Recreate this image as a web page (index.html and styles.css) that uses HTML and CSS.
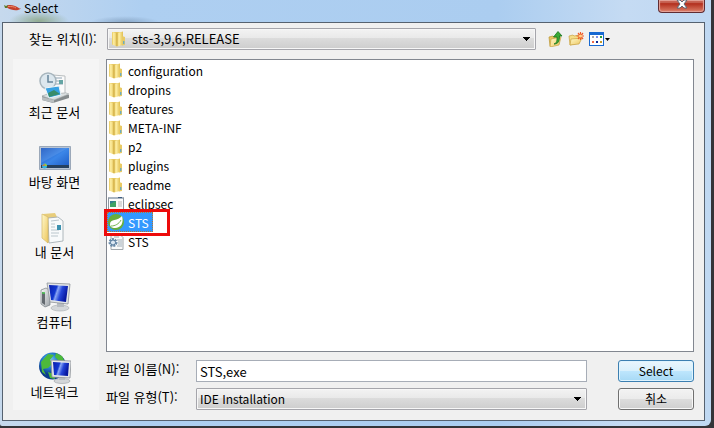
FILE: index.html
```html
<!DOCTYPE html>
<html lang="ko">
<head>
<meta charset="utf-8">
<title>Select</title>
<link rel="stylesheet" href="styles.css">
</head>
<body>
<svg class="defs" aria-hidden="true">
  <defs>
    <linearGradient id="gold" x1="0" x2="1"><stop offset="0" stop-color="#e6c75c"/><stop offset=".35" stop-color="#fff0a6"/><stop offset="1" stop-color="#e0bf52"/></linearGradient>
    <linearGradient id="pale" x1="0" x2="1" y2="1"><stop offset="0" stop-color="#fff9cc"/><stop offset="1" stop-color="#edc65c"/></linearGradient>
    <linearGradient id="screen" x1="0" x2="1" y2="1"><stop offset="0" stop-color="#174fb8"/><stop offset=".5" stop-color="#3b86e8"/><stop offset="1" stop-color="#1b59c4"/></linearGradient>
    <linearGradient id="deep" x1="0" x2="1" y2=".3"><stop offset="0" stop-color="#0a1fae"/><stop offset=".4" stop-color="#1238d0"/><stop offset=".5" stop-color="#8aa6f4"/><stop offset=".7" stop-color="#2445d8"/><stop offset="1" stop-color="#0718a0"/></linearGradient>
    <linearGradient id="metal" x1="0" x2="1" y2="1"><stop offset="0" stop-color="#fafafa"/><stop offset="1" stop-color="#9da3a8"/></linearGradient>
    <radialGradient id="globe" cx=".4" cy=".3"><stop offset="0" stop-color="#8fe0ff"/><stop offset=".5" stop-color="#2b86d6"/><stop offset="1" stop-color="#0b3c8c"/></radialGradient>
    <symbol id="folder" viewBox="0 0 16 16">
      <path d="M2 1h9l1 1v12H2z" fill="#e5c65e"/>
      <path d="M1 1l5 1v13.500l-5-2z" fill="url(#gold)"/>
      <path d="M6 2l6-1.500v13.500l-6 1.500z" fill="url(#gold)"/>
      <path d="M6 2v13" stroke="#c5a03c" stroke-width=".7"/>
      <path d="M11 5l3 1v8l-3 .500z" fill="#e8ca64"/>
      <path d="M12.800 10v3" stroke="#3ba0e6"/>
    </symbol>
  </defs>
</svg>
<main class="window">
  <header class="titlebar">
    <svg class="pepper" viewBox="0 0 18 12" aria-hidden="true"><path d="M4 3.500c4-1 8 0 11 2 1 1 2 1 3 1-3 3-10 2-14-1z" fill="#c4402e"/><path d="M5 4.500c4 0 6 0 8 1.500" stroke="#ee8a66" fill="none"/><path d="M1 3l2 1 2-1-1 3-2 0z" fill="#5d7c2c"/></svg>
    <h1>Select</h1>
    <button class="close" aria-label="Close"><svg viewBox="0 0 14 10" aria-hidden="true"><path d="M2 0h3l2 2 2-2h3L9 4l3 4H9L7 6 5 8H2l3-4z" fill="#fff" stroke="#5f6877"/></svg></button>
  </header>
  <form class="client">
    <div class="lookup">
      <label for="place">찾는 위치(I):</label>
      <div class="combo place">
        <svg class="i16" aria-hidden="true"><use href="#folder"/></svg>
        <select id="place"><option>sts-3,9,6,RELEASE</option></select>
      </div>
      <div class="tools">
        <button type="button" aria-label="Up one level"><svg viewBox="0 0 16 16" aria-hidden="true"><path d="M1 6l4-1 1 1 5-1v8l-9 2z" fill="#e8c560" stroke="#b99432" stroke-width=".7"/><path d="M3 8l10-2-2 8-9 2z" fill="url(#pale)" stroke="#c9a244" stroke-width=".7"/><path d="M6 13c3-1 3-3 3-7H5.500L10 .500 14 5h-2.500c0 5-1 8-5.500 8z" fill="#3aaa35" stroke="#17731d" stroke-width=".8"/></svg></button>
        <button type="button" aria-label="New folder"><svg viewBox="0 0 16 16" aria-hidden="true"><path d="M1 5l4-1 1 1 5-1v8l-9 2z" fill="#f4dd86" stroke="#c9a244" stroke-width=".7"/><path d="M3 8l11-1-3 6-9 1z" fill="url(#pale)" stroke="#c9a244" stroke-width=".7"/><path d="M12.500 1v8M8.500 5h8M10 2l5 6M15 2l-5 6" stroke="#f05a28" stroke-width="1.200"/><circle cx="12.500" cy="5" r="1.600" fill="#ffd28a"/></svg></button>
        <button type="button" class="views" aria-label="View menu"><svg viewBox="0 0 22 16" aria-hidden="true"><path d="M1 1h15v14H1z" fill="#1769d2"/><path d="M2 4h13v10H2z" fill="#fff"/><path d="M4 5h2v2H4z" fill="#aaa"/><path d="M8 5h2v2H8z" fill="#7a8ee8"/><path d="M12 5h2v2h-2z" fill="#239b37"/><path d="M4 10h2v2H4z" fill="#f06b4b"/><path d="M8 10h2v2H8z" fill="#0c2994"/><path d="M12 10h2v2h-2z" fill="#c49a2b"/><path d="M17 7h5l-2.500 3z"/></svg></button>
      </div>
    </div>
    <nav class="places">
      <button type="button"><svg viewBox="0 0 32 32" aria-hidden="true"><path d="M3 24l16-5 11 4v3L14 31 3 28z" fill="#858b8d"/><path d="M3 24l16-6 11 4-15 6z" fill="#dadfe0" stroke="#a5abad" stroke-width=".6"/><path d="M14 3l12 1v17l-12 1z" fill="#fbfbfb" stroke="#b9bdbf"/><path d="M16 6h7M16 9h4M16 12h8" stroke="#91a5b5"/><path d="M20 8h4v4h-4z" fill="#65a5a4"/><circle cx="9" cy="9" r="8" fill="#dce7ee" stroke="#a7b5bd" stroke-width="1.500"/><path d="M9 3v7h5" fill="none" stroke="#65859a" stroke-width="1.500"/><path d="M6 16l14-2 2 9-12 3z" fill="#37a1e2" stroke="#eef5f8"/><path d="M9 21l6-3 6 4-11 3z" fill="#398c69"/><path d="M3 25l12 3v3L3 28z" fill="#b8bdbf"/></svg>최근 문서</button>
      <button type="button"><svg viewBox="0 0 32 32" aria-hidden="true"><path d="M.500 4.500h31v23H.500z" fill="#b7c4d5" stroke="#8c9aad" stroke-width=".8"/><path d="M2 6h28v20H2z" fill="url(#screen)"/><path d="M2 6h27L2 21z" fill="#9bc7ff" opacity=".2"/><path d="M2 23h28v3H2z" fill="#25405f"/><circle cx="5.500" cy="24" r="2.500" fill="#35b5de"/><path d="M5.500 21.500a2.500 2.500 0 0 1 2.500 2.500H5.500z" fill="#95ca3c"/><path d="M3 24h2.500v-2.500z" fill="#e86c3a"/></svg>바탕 화면</button>
      <button type="button"><svg viewBox="0 0 32 32" aria-hidden="true"><path d="M4 2l12-1 2 4v22l-10 4z" fill="#e8cd7b"/><path d="M9 6l10-1 5 4v20l-14 2z" fill="#f8fafb" stroke="#9da7ad" stroke-width=".8"/><path d="M12 9l8-1M12 12h4M12 15h4M12 18h8M12 21h8M12 24h7" stroke="#aab9c2" stroke-width=".8"/><path d="M18 13h4v5h-4z" fill="#3d91af"/><path d="M3 2l6 3v26l-6-5z" fill="url(#pale)" stroke="#d6b968" stroke-width=".7"/></svg>내 문서</button>
      <button type="button"><svg viewBox="0 0 32 32" aria-hidden="true"><path d="M2 8l5-2 4 2v15l-5 2-4-3z" fill="url(#metal)" stroke="#777e84" stroke-width=".7"/><path d="M3 10l3 1v12l-3-2z" fill="#63696f"/><path d="M3 11h3" stroke="#48c551" stroke-width="1.500"/><ellipse cx="21" cy="26" rx="9" ry="3" fill="#d4d7da" stroke="#a4a9ad" stroke-width=".6"/><path d="M18 21h7v4h-7z" fill="#b7bcc1"/><path d="M8 1l23 1-2 20-18-2z" fill="#e2e5e7" stroke="#8d9298" stroke-width=".8"/><path d="M10 3l19 1-2 16-15-2z" fill="url(#deep)"/></svg>컴퓨터</button>
      <button type="button"><svg viewBox="0 0 32 32" aria-hidden="true"><circle cx="13.500" cy="14" r="13.500" fill="url(#globe)"/><path d="M2 10l7-8 6 1-4 5 3 3-5 5-5 1 3 6-4-3zM17 1l6 3 3 6-6-1-4-4zM9 20l6 2 1 5-5-1z" fill="#4dba3b"/><ellipse cx="23" cy="29" rx="8" ry="2.500" fill="#d3d6d9" stroke="#9ba0a5" stroke-width=".6"/><path d="M20 25h6v3h-6z" fill="#b7bcc1"/><path d="M12 8l20 1-1 17-18-1z" fill="#e5e7e9" stroke="#8d9298" stroke-width=".8"/><path d="M14 10l16 1-1 13-14-1z" fill="url(#deep)"/></svg>네트워크</button>
    </nav>
    <ul class="files">
      <li><button type="button"><svg class="i16" aria-hidden="true"><use href="#folder"/></svg><span>configuration</span></button></li>
      <li><button type="button"><svg class="i16" aria-hidden="true"><use href="#folder"/></svg><span>dropins</span></button></li>
      <li><button type="button"><svg class="i16" aria-hidden="true"><use href="#folder"/></svg><span>features</span></button></li>
      <li><button type="button"><svg class="i16" aria-hidden="true"><use href="#folder"/></svg><span>META-INF</span></button></li>
      <li><button type="button"><svg class="i16" aria-hidden="true"><use href="#folder"/></svg><span>p2</span></button></li>
      <li><button type="button"><svg class="i16" aria-hidden="true"><use href="#folder"/></svg><span>plugins</span></button></li>
      <li><button type="button"><svg class="i16" aria-hidden="true"><use href="#folder"/></svg><span>readme</span></button></li>
      <li><button type="button"><svg class="i16" viewBox="0 0 16 16" aria-hidden="true"><path d="M.500 1.500h15v12H.500z" fill="#fafafa" stroke="#8c969f"/><path d="M1 1h14v2H1z" fill="#a9b5c2"/><path d="M10 1.500h4" stroke="#3d5c80"/><path d="M2 5h6v6H2z" fill="#327e90"/><path d="M2 8l6-3v6H2z" fill="#40a265"/><path d="M10 6h4M10 8h4M10 10h4" stroke="#b7b7b7"/></svg><span>eclipsec</span></button></li>
      <li class="marked"><button type="button" class="selected"><svg class="i16" viewBox="0 0 16 16" aria-hidden="true"><circle cx="8" cy="8" r="8" fill="#67ae3e"/><path d="M14 2c2 7-1 12-7 12-3 0-5-1-5-4 0-5 8-3 12-8z" fill="#fff"/><path d="M3 12c4 0 8-2 10-6" fill="none" stroke="#67ae3e" stroke-width=".9"/></svg><span>STS</span></button></li>
      <li><button type="button"><svg class="i16" viewBox="0 0 16 16" aria-hidden="true"><path d="M3 .500h9l3 3v12H3z" fill="#fafafa" stroke="#a1a7ac"/><path d="M6 3h5M9 6h5M10 8h4M10 10h4M9 12h5" stroke="#9eacb6"/><circle cx="5" cy="8.500" r="3.500" fill="#dce8f3" stroke="#6889a7" stroke-width="2" stroke-dasharray="2 1"/><circle cx="5" cy="8.500" r="2.500" fill="none" stroke="#55799b"/></svg><span>STS</span></button></li>
    </ul>
    <div class="fields">
      <label for="name">파일 이름(N):</label>
      <input id="name" type="text" value="STS,exe">
      <button type="submit" class="action primary">Select</button>
      <label for="type">파일 유형(T):</label>
      <div class="combo"><select id="type"><option>IDE Installation</option></select></div>
      <button type="button" class="action">취소</button>
    </div>
  </form>
</main>
</body>
</html>
```
FILE: styles.css
```css
* { box-sizing: border-box; }

body {
  margin: 0;
  background: #343438;
  color: #000;
  font: 13px/16px "Noto Sans CJK KR", sans-serif;
}

button, input, select { font: inherit; color: inherit; }
button { padding: 0; border: 0; background: none; }
svg { display: block; flex: none; }
.defs { position: absolute; width: 0; height: 0; }
.i16 { width: 16px; height: 16px; }

.window {
  display: flex;
  flex-direction: column;
  min-height: calc(100vh - 2px);
  margin-right: 3px;
  padding: 0 6px 5px 2px;
  border-radius: 0 0 6px 2px;
  background:
    radial-gradient(ellipse 30px 10px at 39px 21px, #91ab91, transparent),
    radial-gradient(ellipse 34px 6px at 125px 22px, #8ba9c9, transparent),
    linear-gradient(90deg, #c6d9ed 0, #aecff1 20%, #abcdf0 70%, #c5dbf3 88%, #bfd8f2 100%);
}

.titlebar { display: flex; height: 22px; align-items: flex-start; }
.pepper { width: 18px; height: 12px; margin: 2px 3px 0 1px; }
.titlebar h1 { margin: 0; font: 12px/16px "Noto Sans CJK KR", sans-serif; }
.close {
  display: flex;
  justify-content: center;
  width: 47px;
  height: 13px;
  margin-left: auto;
  border: 1px solid #602c32;
  border-top: 0;
  border-radius: 0 0 4px 4px;
  background: linear-gradient(#c55e4e 0 25%, #b22e1d 30%, #dc8069);
  box-shadow: inset 0 0 1px 1px #e5a69c;
}
.close svg { width: 14px; height: 10px; }

.client {
  flex: 1;
  display: grid;
  grid-template: 36px 1fr 58px / 86px minmax(0, 1fr);
  column-gap: 7px;
  padding: 0 10px 10px;
  border: 1px solid #566270;
  background: #f0f0f0;
}

.lookup {
  grid-column: 1 / -1;
  display: grid;
  grid-template-columns: 83px minmax(0, 1fr) 147px;
  column-gap: 11px;
  padding-top: 5px;
}
.lookup label { padding: 3px 0 0 16px; white-space: nowrap; }

.combo {
  display: flex;
  align-items: center;
  height: 22px;
  border: 1px solid #a5a5ab;
  border-radius: 1px;
  background: linear-gradient(#f3f3f3, #e9e9e9 45%, #dcdcdc 46%, #cdcdcd);
  box-shadow: inset 0 0 0 1px #f7f7f7;
}
.combo.place { padding-left: 3px; }
.combo select {
  appearance: none;
  flex: 1;
  min-width: 0;
  height: 20px;
  padding: 0 20px 0 3px;
  border: 0;
  background: conic-gradient(from 315deg at 50% 100%, #000 90deg, transparent 0) no-repeat right 5px center / 7px 4px;
  font-size: 12px;
  outline: 0;
}
.combo.place select { padding-left: 5px; font-size: 13px; }

.tools { display: flex; align-items: flex-start; gap: 4px; padding: 3px 0 0 1px; }
.tools svg { width: 16px; height: 16px; }
.tools .views svg { width: 22px; }

.places { grid-row: 2 / 4; background: #f5f5f5; }
.places button {
  display: flex;
  flex-direction: column;
  align-items: center;
  width: 100%;
  height: 70px;
  padding: 13px 3px 0 0;
}
.places svg { width: 32px; height: 32px; }

.files {
  margin: 0;
  padding: 1px 0;
  border: 1px solid #828790;
  background: #fff;
  list-style: none;
  font: 12px/17px "Noto Sans CJK KR", sans-serif;
}
.files li { width: max-content; height: 19px; }
.files button { display: flex; align-items: center; gap: 1px; height: 19px; padding-left: 1px; }
.files span { padding: 0 3px; }
.files .marked {
  width: 66px;
  height: 27px;
  margin: -4px 0 -4px -3px;
  border: 3px solid #ed0b0b;
  position: relative;
}
.files .selected { height: 20px; padding-right: 1px; background: #3399ff; color: #fff; outline: 1px dotted #b87530; outline-offset: -1px; }

.fields {
  display: grid;
  grid-template-columns: 73px minmax(0, 1fr) 90px;
  grid-template-rows: 22px 22px;
  gap: 6px 17px;
  padding-top: 8px;
}
.fields label { white-space: nowrap; padding-top: 1px; }
.fields input { width: 100%; height: 22px; padding: 0 3px; border: 1px solid #a7adb7; background: #fff; outline: 0; }
.fields input, .fields .combo { min-width: 0; margin: 0; }
.action {
  margin-left: 14px;
  border: 1px solid #707070;
  border-radius: 3px;
  background: linear-gradient(#f3f3f3, #ebebeb 48%, #dddddd 50%, #cfcfcf);
  box-shadow: inset 0 0 0 1px #f8f8f8;
  font-size: 12px;
}
.action.primary {
  border-color: #3c7fb1;
  background: linear-gradient(#eaf6fd, #d9f0fc 48%, #bee6fd 50%, #a7d9f5);
  box-shadow: inset 0 0 0 1px #dff4ff;
}
```
